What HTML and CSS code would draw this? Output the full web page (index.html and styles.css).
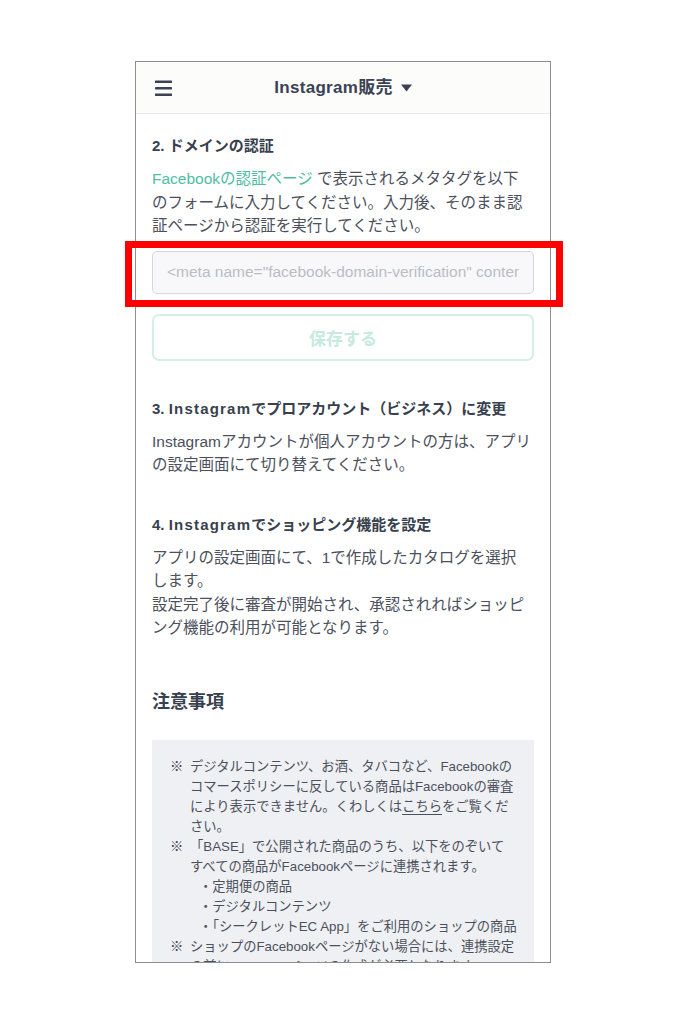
FILE: index.html
```html
<!DOCTYPE html>
<html lang="ja">
<head>
<meta charset="utf-8">
<title>Instagram販売</title>
<link rel="stylesheet" href="styles.css">
</head>
<body>
<div class="page">
  <div class="phone">
    <header class="topbar">
      <button class="menu-btn" aria-label="メニュー">
        <svg width="18" height="16" viewBox="0 0 18 16"><rect x="0" y="0.5" width="17" height="2.6" rx="0.5"/><rect x="0" y="7" width="17" height="2.6" rx="0.5"/><rect x="0" y="13.5" width="17" height="2.6" rx="0.5"/></svg>
      </button>
      <div class="title"><span class="title-text">Instagram販売</span><svg class="caret" width="11" height="8" viewBox="0 0 11 8"><path d="M0 0.5 H11 L5.5 7.5 Z"/></svg></div>
      <div class="spacer"></div>
    </header>

    <main class="content">
      <section class="step step-first">
        <h2 class="step-title">2. ドメインの認証</h2>
        <p class="step-text"><a class="link" href="#">Facebookの認証ページ</a> で表示されるメタタグを以下<br>のフォームに入力してください。入力後、そのまま認<br>証ページから認証を実行してください。</p>
        <div class="field">
          <input class="meta-input" type="text" placeholder="<meta name=&quot;facebook-domain-verification&quot; content=&quot;&quot; />">
        </div>
        <button class="save-btn" disabled>保存する</button>
      </section>

      <section class="step">
        <h2 class="step-title">3. <span class="wide">Instagram</span>でプロアカウント（ビジネス）に変更</h2>
        <p class="step-text">Instagramアカウントが個人アカウントの方は、アプリ<br>の設定画面にて切り替えてください。</p>
      </section>

      <section class="step">
        <h2 class="step-title">4. <span class="wide">Instagram</span>でショッピング機能を設定</h2>
        <p class="step-text">アプリの設定画面にて、1で作成したカタログを選択<br>します。<br>設定完了後に審査が開始され、承認されればショッピ<br>ング機能の利用が可能となります。</p>
      </section>

      <h2 class="notes-title">注意事項</h2>
      <div class="notes">
        <div class="note"><span class="mark">※</span><div class="note-body">デジタルコンテンツ、お酒、タバコなど、Facebookの<br>コマースポリシーに反している商品はFacebookの審査<br>により表示できません。くわしくは<a class="plain-link" href="#">こちら</a>をご覧くだ<br>さい。</div></div>
        <div class="note"><span class="mark">※</span><div class="note-body">「BASE」で公開された商品のうち、以下をのぞいて<br>すべての商品がFacebookページに連携されます。
          <ul class="sub-list">
            <li>・定期便の商品</li>
            <li>・デジタルコンテンツ</li>
            <li>・「シークレットEC App」をご利用のショップの商品</li>
          </ul></div></div>
        <div class="note"><span class="mark">※</span><div class="note-body">ショップのFacebookページがない場合には、連携設定<br>の前にFacebookページの作成が必要となります。</div></div>
      </div>
    </main>
  </div>
  <div class="highlight" aria-hidden="true"></div>
</div>
</body>
</html>
```

FILE: styles.css
```css
* { box-sizing: border-box; }

html, body {
  margin: 0;
  padding: 0;
  background: #ffffff;
}

body {
  font-family: "Liberation Sans", "Noto Sans CJK JP", sans-serif;
  color: #4b505c;
}

.page {
  position: relative;
  width: 685px;
  height: 1024px;
  padding-top: 61px;
}

.phone {
  width: 416px;
  height: 902px;
  margin-left: 135px;
  border: 1px solid #8e8e8e;
  background: #ffffff;
  overflow: hidden;
}

.topbar {
  display: grid;
  grid-template-columns: 1fr auto 1fr;
  align-items: center;
  height: 52px;
  background: #fcfcfa;
  border-bottom: 1px solid #ebebef;
  padding: 0 19px;
}

.menu-btn {
  justify-self: start;
  background: none;
  border: 0;
  padding: 0;
  margin: 0;
  width: 18px;
  height: 16px;
  display: flex;
}

.menu-btn svg { fill: #3b4255; }

.title {
  display: flex;
  align-items: center;
  gap: 8px;
  font-size: 17px;
  font-weight: 700;
  color: #3b4255;
  line-height: 24px;
}

.title-text { letter-spacing: 0.3px; }

.caret { fill: #3b4255; margin-top: 1px; }

.content {
  padding: 21px 16px 0 16px;
}

.step + .step { margin-top: 37px; }

.step-title {
  margin: 0;
  font-size: 15px;
  font-weight: 700;
  line-height: 22px;
  color: #383f4e;
}

.wide { letter-spacing: 1.2px; }

.step-text {
  margin: 10px 0 0;
  font-size: 15.5px;
  line-height: 23.5px;
  color: #4b505c;
  white-space: nowrap;
}

.link {
  color: #4dbea4;
  text-decoration: none;
}

.field { margin-top: 13px; }

.meta-input {
  display: block;
  width: 100%;
  height: 43px;
  border: 1px solid #d3d6df;
  border-radius: 5px;
  background: #f8f8fa;
  padding: 0 14px;
  font-family: "Liberation Sans", "Noto Sans CJK JP", sans-serif;
  font-size: 15.5px;
  color: #4b505c;
  outline: none;
}

.meta-input::placeholder { color: #b9bdc6; opacity: 1; }

.save-btn {
  display: block;
  width: 100%;
  height: 47px;
  margin-top: 20px;
  border: 2px solid #d3efe8;
  border-radius: 7px;
  background: #ffffff;
  color: #c6e9e1;
  font-family: "Liberation Sans", "Noto Sans CJK JP", sans-serif;
  font-size: 17px;
  font-weight: 700;
  padding: 0;
}

.notes-title {
  margin: 49px 0 0;
  font-size: 18px;
  font-weight: 700;
  line-height: 26px;
  color: #383f4e;
}

.notes {
  margin-top: 25px;
  background: #eff0f3;
  padding: 17px 12px 20px 18px;
  font-size: 13.3px;
  line-height: 20px;
  color: #4b505c;
}

.note {
  display: flex;
  white-space: nowrap;
}

.mark {
  flex: 0 0 20px;
  font-weight: 700;
  color: #3f4450;
}

.note-body { flex: 1; }

.plain-link {
  color: inherit;
  text-decoration: underline;
  text-underline-offset: 3px;
}

.sub-list {
  list-style: none;
  margin: 0;
  padding: 0 0 0 9px;
}

.highlight {
  position: absolute;
  left: 125px;
  top: 241px;
  width: 438px;
  height: 66px;
  border: 7px solid #ff0000;
  pointer-events: none;
}
```
